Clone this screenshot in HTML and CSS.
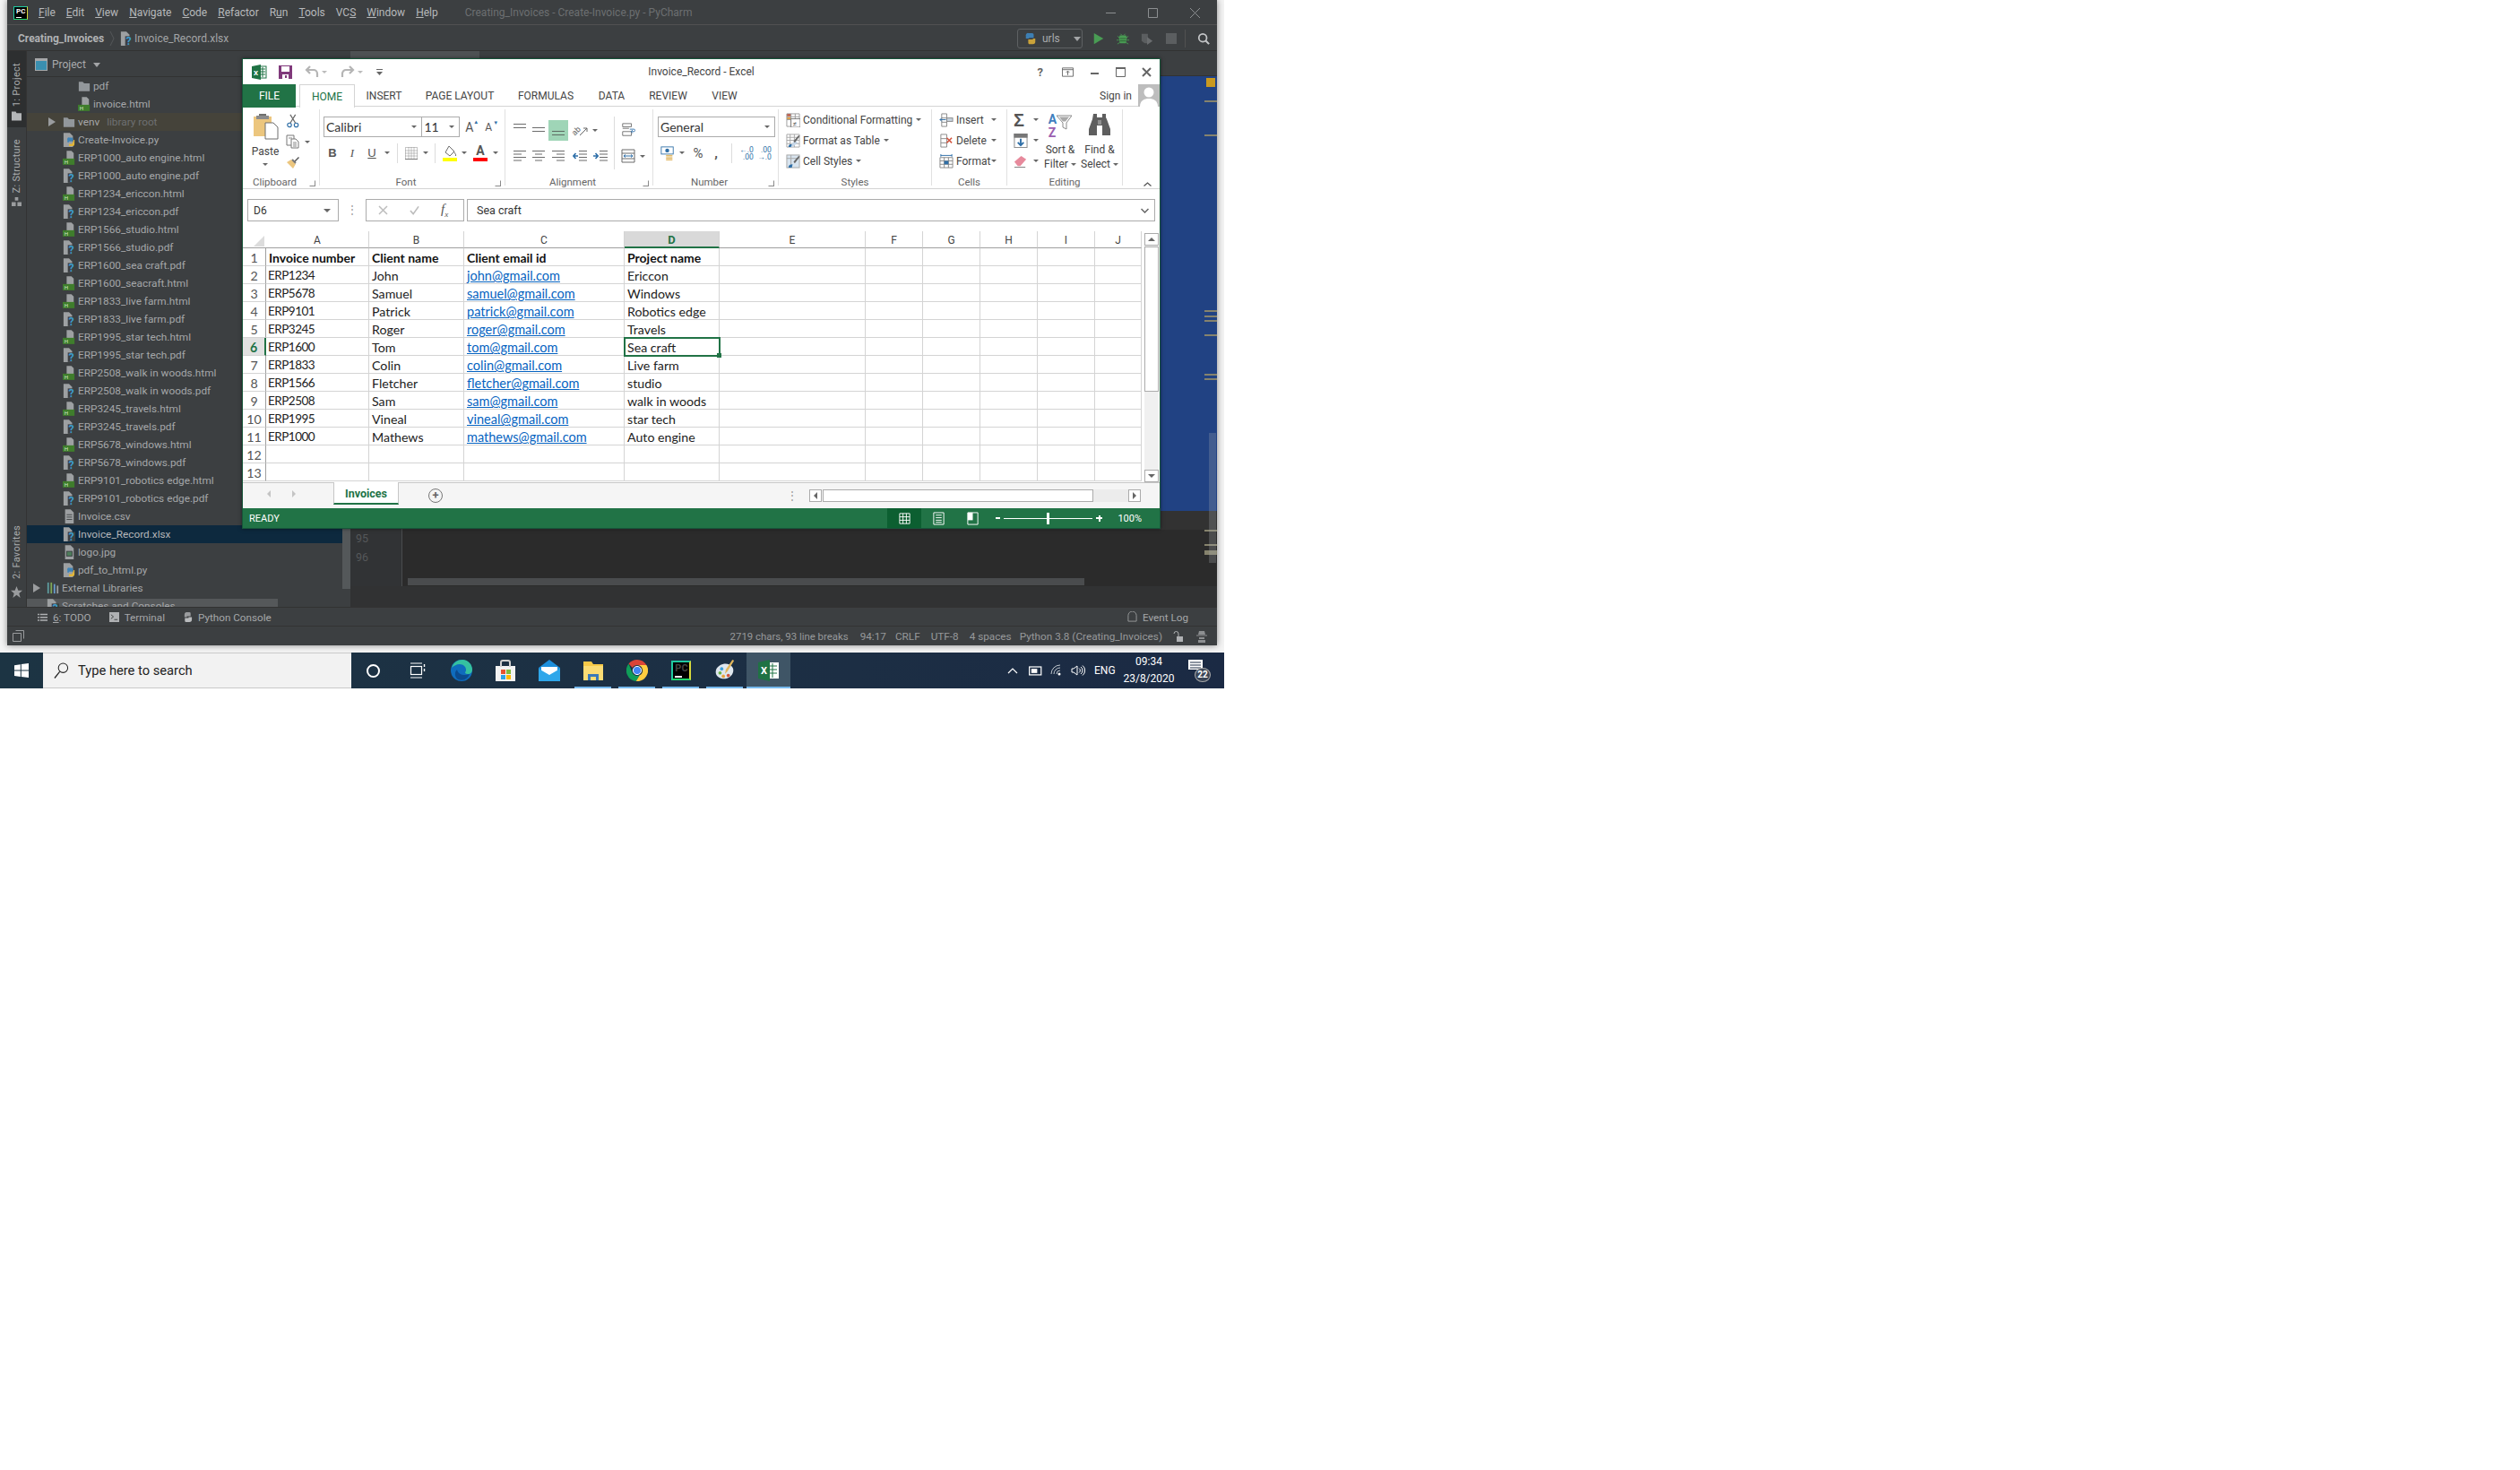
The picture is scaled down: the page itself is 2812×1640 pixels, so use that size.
FILE: index.html
```html
<!DOCTYPE html>
<html lang="en">
<head>
<meta charset="UTF-8" />
<title>Invoice_Record - Excel</title>
<link rel="stylesheet" href="styles.css">
</head>
<body>

<svg class="defs" xmlns="http://www.w3.org/2000/svg">
  <symbol id="f-h" viewBox="0 0 16 18"><path d="M5 0h6l3 3v7H5z" fill="#9da0a2"/><rect y="10" width="15" height="8" fill="#3f7d2c"/><text x="2" y="16.5" font-size="7" font-family="Roboto" fill="#cfe6c6">H</text></symbol>
  <symbol id="f-q" viewBox="0 0 16 18"><path d="M1 0h7l4 4v14H1z" fill="#9da0a2"/><rect x="6.500" y="6" width="9.500" height="12" fill="#3c3f41"/><text x="7.500" y="17.500" font-size="14" font-weight="700" font-family="Roboto" fill="#3d9ccc">?</text></symbol>
  <symbol id="f-py" viewBox="0 0 16 18"><path d="M1 0h8l4 4v14H1z" fill="#9da0a2"/><path d="M8 6h4a2 2 0 0 1 1 2v3H8v1H6v-3a2 2 0 0 1 2-3z" fill="#3d83b8"/><path d="M14 9h1v5a3 3 0 0 1-3 3H8v-3h4z" fill="#e0b53a"/></symbol>
  <symbol id="f-txt" viewBox="0 0 16 18"><path d="M3 0h7l4 4v14H3z" fill="#9da0a2"/><path d="M5 7h7M5 10h7M5 13h7" stroke="#3c3f41"/></symbol>
  <symbol id="f-img" viewBox="0 0 16 18"><path d="M3 0h7l4 4v14H3z" fill="#9da0a2"/><rect x="5" y="8" width="7" height="6" fill="#4d7c5a" stroke="#3c3f41"/></symbol>
  <symbol id="folder" viewBox="0 0 16 14"><path d="M1 1h5l2 2h7v10H1z" fill="#92979b"/></symbol>
  <symbol id="libs" viewBox="0 0 16 16"><path d="M1 1h2v14H1z" fill="#5f9ea0"/><path d="M5 1h2v14H5z" fill="#7fa856"/><path d="M9 3h2v12H9z" fill="#6a9fd0"/><path d="M13 5h2v10h-2z" fill="#9da0a2"/></symbol>
  <symbol id="grid" viewBox="0 0 16 16"><path d="M2 2h12v12H2zM2 6h12M2 10h12M6 2v12M10 2v12" fill="none" stroke="#fff"/></symbol>

  <symbol id="al-top" viewBox="0 0 16 16"><path d="M1 1.500h14M1 5.500h14" stroke="#6b6b6b"/></symbol>
  <symbol id="al-mid" viewBox="0 0 16 16"><path d="M1 5.500h14M1 9.500h14" stroke="#6b6b6b"/></symbol>
  <symbol id="al-bot" viewBox="0 0 16 16"><path d="M1 9.500h14M1 13.500h14" stroke="#5d6b62"/></symbol>
  <symbol id="al-l" viewBox="0 0 16 16"><path d="M1 2.500h14M1 6h9M1 9.500h14M1 13h9" stroke="#6b6b6b"/></symbol>
  <symbol id="al-c" viewBox="0 0 16 16"><path d="M1 2.500h14M4 6h8M1 9.500h14M4 13h8" stroke="#6b6b6b"/></symbol>
  <symbol id="al-r" viewBox="0 0 16 16"><path d="M1 2.500h14M6 6h9M1 9.500h14M6 13h9" stroke="#6b6b6b"/></symbol>
  <symbol id="ind-l" viewBox="0 0 16 16"><path d="M7 2.500h9M7 6h9M7 9.500h9M7 13h9" stroke="#6b6b6b"/><path d="M6 8H1M3.500 5L.8 8l2.700 3" fill="none" stroke="#2d6ea8" stroke-width="1.600"/></symbol>
  <symbol id="ind-r" viewBox="0 0 16 16"><path d="M7 2.500h9M7 6h9M7 9.500h9M7 13h9" stroke="#6b6b6b"/><path d="M0 8h5M2.500 5L5.200 8l-2.700 3" fill="none" stroke="#2d6ea8" stroke-width="1.600"/></symbol>
  <symbol id="orient" viewBox="0 0 18 16"><text x="0" y="12" font-size="9" font-family="Roboto" fill="#666" transform="rotate(-45 5 9)">ab</text><path d="M9 14l8-8m0 0h-4m4 0v4" fill="none" stroke="#666"/></symbol>
  <symbol id="wrap" viewBox="0 0 16 18"><path d="M1 1h11v4H1zM1 7h8M1 11h11v5H1z" fill="none" stroke="#6b6b6b"/><path d="M10 8h5a1.500 1.500 0 0 1 0 3h-3m1.500-2L11.500 11l2 2" fill="none" stroke="#2d6ea8"/></symbol>
  <symbol id="merge" viewBox="0 0 16 16"><path d="M1 1h14v14H1zM1 5h14M1 11h14" fill="none" stroke="#6b6b6b"/><path d="M3 8h10M3 8l2-1.500M3 8l2 1.500M13 8l-2-1.500M13 8l-2 1.500" fill="none" stroke="#2d6ea8"/></symbol>

  <symbol id="border" viewBox="0 0 16 16"><path d="M1.500 1.500h13v13h-13zM1.500 8h13M8 1.500v13M5 1.500v13M11 1.500v13M1.500 5h13M1.500 11h13" fill="none" stroke="#8a8a8a" stroke-dasharray="1 1"/><path d="M1 14.500h14" stroke="#777"/></symbol>
  <symbol id="fill" viewBox="0 0 18 18"><path d="M8 1l6 6-5 5-5-4z" fill="#fff" stroke="#6a6a6a"/><path d="M14 8c1 2 2 2 1.500 4" fill="none" stroke="#6a6a6a"/><rect x="1" y="14" width="16" height="4" fill="#ffff00"/></symbol>
  <symbol id="paste" viewBox="0 0 30 30"><path d="M2 4h20v22H2z" fill="#ecc67e"/><path d="M8 3h8V1H8z" fill="#70706e"/><rect x="5" y="3" width="14" height="4" fill="#8c8c8c"/><path d="M15 11h9l5 5v13H15z" fill="#fff" stroke="#6e6e6e"/></symbol>
  <symbol id="scissors" viewBox="0 0 16 18"><circle cx="3.500" cy="14" r="2.500" fill="none" stroke="#2f6fa7" stroke-width="1.300"/><circle cx="12" cy="14" r="2.500" fill="none" stroke="#2f6fa7" stroke-width="1.300"/><path d="M4.500 11.500L11 1M11 11.500L4.500 1" stroke="#6a6a6a" stroke-width="1.400"/></symbol>
  <symbol id="copy" viewBox="0 0 16 16"><path d="M1 1h8v11H1z" fill="#fff" stroke="#777"/><path d="M6 5h5l3 3v7H6z" fill="#fff" stroke="#777"/><path d="M8 9h4M8 11h4M8 13h4M3 4h4" stroke="#888"/></symbol>
  <symbol id="painter" viewBox="0 0 16 16"><path d="M1 8l7 7 3-5-5-5z" fill="#ecc67e"/><path d="M9 7l5-5 1 1-5 5z" fill="#555"/><path d="M7 5l4 4" stroke="#777" stroke-width="2"/></symbol>
  <symbol id="cond" viewBox="0 0 17 17"><rect x="1" y="1" width="5" height="3" fill="#c9553f"/><rect x="1" y="5" width="5" height="3" fill="#e1a24a"/><path d="M1 1h15v15H1zM1 4.500h15M1 8h15M6 1v15M11 1v15" fill="none" stroke="#9a9a9a"/><rect x="6" y="7" width="11" height="10" fill="#fff" stroke="#777"/><text x="8" y="15.500" font-size="9" font-family="Roboto" fill="#555">≠</text></symbol>
  <symbol id="fmt-table" viewBox="0 0 17 17"><path d="M1 1h15v15H1zM1 4.500h15M1 8h15M1 12h15M5 1v15M10 1v15" fill="none" stroke="#a6a6a6"/><path d="M3 16l8-8 3 3-6 5z" fill="#c6d6e6"/><path d="M9 9l6-7 1.500 1-6 8z" fill="#666"/><path d="M3 16c0-3 2-4 4-3l-1 3z" fill="#2f6fa7"/></symbol>
  <symbol id="cell-style" viewBox="0 0 17 17"><rect x="1" y="1" width="15" height="15" fill="#d8e4ef" stroke="#a6a6a6"/><path d="M1 5h15M6 1v15" stroke="#a6a6a6"/><path d="M9 9l6-7 1.500 1-6 8z" fill="#666"/><path d="M3 16c0-3 2-4 5-4l-1 4z" fill="#2f6fa7"/></symbol>
  <symbol id="c-ins" viewBox="0 0 17 17"><path d="M3 1h6v15H3zM3 6h6M3 11h6" fill="none" stroke="#888"/><rect x="9" y="6" width="7" height="4" fill="#c8d4e0" stroke="#888"/><path d="M8 8H1m2-2L1 8l2 2" fill="none" stroke="#2f6fa7"/></symbol>
  <symbol id="c-del" viewBox="0 0 17 17"><path d="M2 1h7v15H2zM2 6h7M2 11h7" fill="none" stroke="#888"/><path d="M9 5l6 6m0-6l-6 6" stroke="#d2553f" stroke-width="1.600"/></symbol>
  <symbol id="c-fmt" viewBox="0 0 17 17"><path d="M1 4h15v12H1zM1 8h15M1 12h15M6 4v12M11 4v12" fill="none" stroke="#888"/><path d="M2 1.500h13M2 0v3M15 0v3" fill="none" stroke="#2f6fa7"/><rect x="6" y="8" width="5" height="4" fill="#2f6fa7"/></symbol>
  <symbol id="filldown" viewBox="0 0 16 17"><rect x=".5" y=".5" width="15" height="16" fill="#fff" stroke="#888"/><rect width="16" height="5" fill="#777"/><path d="M8 6v8M4.500 10.500L8 14l3.500-3.500" fill="none" stroke="#2f6fa7" stroke-width="2"/></symbol>
  <symbol id="eraser" viewBox="0 0 17 17"><path d="M1 9l8-7 6 4-7 8H5z" fill="#e78a9c"/><path d="M1 15.500h13" stroke="#777"/></symbol>
  <symbol id="funnel" viewBox="0 0 17 17"><path d="M0 1h17l-6 8v7l-4-2V9z" fill="#fff" stroke="#8a8a8a"/><path d="M3 2.500h11l-4 5H7z" fill="#a8a8a8"/></symbol>
  <symbol id="binoc" viewBox="0 0 26 26"><path d="M6 1h4v4h6V1h4v4l1 2 4 11v7h-9V14h-6v11H1v-7L5 7z" fill="#5e5e5e"/><path d="M11 8h4v5h-4z" fill="#909090"/></symbol>
  <symbol id="money" viewBox="0 0 18 18"><rect x="1" y="1" width="15" height="9" fill="#fff" stroke="#2f6fa7"/><circle cx="8.500" cy="5.500" r="2.500" fill="#2f6fa7"/><rect x="7" y="11" width="8" height="2" fill="#e3bb6b"/><rect x="7" y="14" width="8" height="2" fill="#e3bb6b"/><rect x="7" y="16.500" width="8" height="1.500" fill="#e3bb6b"/></symbol>

  <symbol id="start" viewBox="0 0 16 16"><path d="M0 2.200L6.800 1.200v6.400H0zM7.800 1.100L16 0v7.600H7.800zM0 8.600h6.800v6.300L0 14zM7.800 8.600H16V16l-8.200-1.100z" fill="#fff"/></symbol>
  <symbol id="taskview" viewBox="0 0 18 18"><path d="M1 1h13M1 17h13" stroke="#fff" stroke-width="1.200"/><rect x="1.500" y="4.500" width="12" height="9" fill="none" stroke="#fff" stroke-width="1.200"/><path d="M16.500 2v3M16.500 7v3" stroke="#fff" stroke-width="1.400"/></symbol>
  <symbol id="edge" viewBox="0 0 24 24"><circle cx="12" cy="12" r="12" fill="#0f6cbd"/><path d="M1 9C3 2 9 0 13 0c7 0 11 6 11 11 0 3-2 5-5 5-2 0-3-1-3-2 1-1 1-2 1-3 0-3-3-6-7-6-4 0-7 2-9 4z" fill="#35c1a0"/><path d="M8 22c-4-3-4-8-1-11 1 4 4 6 9 6 2 0 4-1 5-1-2 5-6 8-13 6z" fill="#0b4b8e"/></symbol>
  <symbol id="store" viewBox="0 0 24 24"><path d="M1 7h22v17H1z" fill="#f2f2f2"/><path d="M7 8V3a2 2 0 0 1 2-2h6a2 2 0 0 1 2 2v5" fill="none" stroke="#d0d0d0" stroke-width="2"/><rect x="7" y="11" width="5" height="5" fill="#e8532e"/><rect x="13" y="11" width="5" height="5" fill="#7fba3c"/><rect x="7" y="17" width="5" height="5" fill="#2ea3e6"/><rect x="13" y="17" width="5" height="5" fill="#fdb900"/></symbol>
  <symbol id="mail" viewBox="0 0 24 24"><path d="M0 9L12 0l12 9v15H0z" fill="#1c8fdc"/><path d="M3 8h18v7l-9 5-9-5z" fill="#fff"/><path d="M0 10l12 7 12-7v14H0z" fill="#2fa7ea"/></symbol>
  <symbol id="explorer" viewBox="0 0 24 24"><path d="M1 2h9l2 3h11v18H1z" fill="#f7c948"/><path d="M1 7h22v16H1z" fill="#fbdc74"/><path d="M6 23v-7h12v7h-3v-4H9v4z" fill="#3a79b8"/></symbol>
  <symbol id="chrome" viewBox="0 0 24 24"><path d="M12 0a12 12 0 0 1 10.400 6H12a6 6 0 0 0-5.200 3L2.500 4.600A12 12 0 0 1 12 0z" fill="#db4437"/><path d="M2.500 4.600L6.800 15a6 6 0 0 0 8 2.300L10.800 24A12 12 0 0 1 2.500 4.600z" fill="#0f9d58"/><path d="M22.400 6A12 12 0 0 1 10.800 24l4-6.700A6 6 0 0 0 12 6z" fill="#ffcd40"/><circle cx="12" cy="12" r="4.600" fill="#4285f4" stroke="#fff"/></symbol>
  <symbol id="palette" viewBox="0 0 26 26"><path d="M12 5c7-1 12 4 11 9-1 6-7 10-13 9-6-1-9-5-8-10 1-4 5-7 10-8z" fill="#dfe7ee"/><circle cx="9" cy="11" r="2" fill="#3ca0dc"/><circle cx="7" cy="16" r="2" fill="#6bb344"/><circle cx="11" cy="20" r="2" fill="#e8a13a"/><circle cx="17" cy="19" r="2" fill="#d2553f"/><path d="M22 0l2 1-8 13-3 3 1-5z" fill="#e2b75c"/></symbol>
</svg>

<div class="desktop">
  <div class="ide">
    <div class="menubar">
      <div class="pc-logo"><span>PC</span></div>
      <nav class="menu">
        <span><u>F</u>ile</span><span><u>E</u>dit</span><span><u>V</u>iew</span><span><u>N</u>avigate</span><span><u>C</u>ode</span><span><u>R</u>efactor</span><span>R<u>u</u>n</span><span><u>T</u>ools</span><span>VC<u>S</u></span><span><u>W</u>indow</span><span><u>H</u>elp</span>
      </nav>
      <div class="ide-title">Creating_Invoices - Create-Invoice.py - PyCharm</div>
      <div class="win-ctl">
        <svg class="wc" viewBox="0 0 11 11"><path d="M0 5.500h11" stroke="#8c8f91"/></svg>
        <svg class="wc" viewBox="0 0 11 11"><path d="M.5.500h10v10H.5z" fill="none" stroke="#8c8f91"/></svg>
        <svg class="wc" viewBox="0 0 11 11"><path d="M0 0l11 11M11 0L0 11" stroke="#8c8f91"/></svg>
      </div>
    </div>

    <div class="navbar">
      <b class="crumb">Creating_Invoices</b>
      <svg class="crumb-sep" viewBox="0 0 6 18"><path d="M1 1l4 8-4 8" fill="none" stroke="#55585a"/></svg>
      <svg class="fi"><use href="#f-q"/></svg>
      <span class="crumb-file">Invoice_Record.xlsx</span>
      <div class="runbar">
        <div class="run-combo">
          <svg class="py-ic" viewBox="0 0 16 16"><path d="M5 1h5a2 2 0 0 1 2 2v4H6v1H2V5a3 3 0 0 1 3-4z" fill="#3d7fb3"/><path d="M14 8v4a3 3 0 0 1-3 3H6a2 2 0 0 1-1-2V9h6V8z" fill="#c9a23a"/></svg>
          <span>urls</span>
          <i class="caret-ide"></i>
        </div>
        <svg class="rb" viewBox="0 0 14 16"><path d="M1 1l12 7-12 7z" fill="#499c54"/></svg>
        <svg class="rb" viewBox="0 0 16 16"><path d="M4 4h8l1 3-1 7H4L3 7z" fill="#499c54"/><path d="M1 5l3 2M15 5l-3 2M0 10h3M16 10h-3M1 15l3-2M15 15l-3-2M5 2l2 2M11 2L9 4" stroke="#499c54"/><path d="M4 8h8M4 11h8" stroke="#2f6034"/></svg>
        <svg class="rb" viewBox="0 0 16 16"><path d="M1 2h8v12H5l-4-3z" fill="#5b5e60"/><path d="M8 6l7 5-7 5z" fill="#6a6d6f"/></svg>
        <svg class="rb" viewBox="0 0 14 14"><rect x="1" y="1" width="12" height="12" fill="#5b5e60"/></svg>
        <i class="rb-sep"></i>
        <svg class="rb" viewBox="0 0 16 16"><circle cx="7" cy="7" r="5" fill="none" stroke="#c4c6c8" stroke-width="2"/><path d="M10.500 10.500L15 15" stroke="#c4c6c8" stroke-width="2.400"/></svg>
      </div>
    </div>

    <div class="main">
      <aside class="stripe">
        <div class="stripe-btn active"><span class="vtext">1: Project</span><svg class="st-ic" viewBox="0 0 12 11"><path d="M0 0h5l1 2h6v9H0z" fill="#b4b6b8"/></svg></div>
        <div class="stripe-btn"><span class="vtext">Z: Structure</span><svg class="st-ic" viewBox="0 0 12 12"><path d="M4 0h4v4H4zM0 6h5v5H0zM7 6h5v5H7z" fill="#9a9c9e"/></svg></div>
        <div class="stripe-btn fav"><span class="vtext">2: Favorites</span><svg class="st-ic star" viewBox="0 0 14 14"><path d="M7 0l2 5h5l-4 3.500L11.500 14 7 10.500 2.500 14 4 8.500 0 5h5z" fill="#9a9c9e"/></svg></div>
      </aside>

      <section class="project">
        <header class="project-head">
          <svg class="proj-ic" viewBox="0 0 14 14"><rect x=".5" y=".5" width="13" height="13" fill="#3a8fb0" stroke="#a6a8aa"/><rect x="1" y="1" width="12" height="2" fill="#a6a8aa"/></svg>
          <span>Project</span><i class="caret-ide"></i>
        </header>
        <ul class="tree">
          <li class="row lv2"><svg class="fi fold"><use href="#folder"/></svg>pdf</li>
          <li class="row lv2"><svg class="fi"><use href="#f-h"/></svg>invoice.html</li>
          <li class="row venv"><i class="arrow"></i><svg class="fi fold"><use href="#folder"/></svg>venv<em>library root</em></li>
          <li class="row"><svg class="fi"><use href="#f-py"/></svg>Create-Invoice.py</li>
          <li class="row"><svg class="fi"><use href="#f-h"/></svg>ERP1000_auto engine.html</li>
          <li class="row"><svg class="fi"><use href="#f-q"/></svg>ERP1000_auto engine.pdf</li>
          <li class="row"><svg class="fi"><use href="#f-h"/></svg>ERP1234_ericcon.html</li>
          <li class="row"><svg class="fi"><use href="#f-q"/></svg>ERP1234_ericcon.pdf</li>
          <li class="row"><svg class="fi"><use href="#f-h"/></svg>ERP1566_studio.html</li>
          <li class="row"><svg class="fi"><use href="#f-q"/></svg>ERP1566_studio.pdf</li>
          <li class="row"><svg class="fi"><use href="#f-q"/></svg>ERP1600_sea craft.pdf</li>
          <li class="row"><svg class="fi"><use href="#f-h"/></svg>ERP1600_seacraft.html</li>
          <li class="row"><svg class="fi"><use href="#f-h"/></svg>ERP1833_live farm.html</li>
          <li class="row"><svg class="fi"><use href="#f-q"/></svg>ERP1833_live farm.pdf</li>
          <li class="row"><svg class="fi"><use href="#f-h"/></svg>ERP1995_star tech.html</li>
          <li class="row"><svg class="fi"><use href="#f-q"/></svg>ERP1995_star tech.pdf</li>
          <li class="row"><svg class="fi"><use href="#f-h"/></svg>ERP2508_walk in woods.html</li>
          <li class="row"><svg class="fi"><use href="#f-q"/></svg>ERP2508_walk in woods.pdf</li>
          <li class="row"><svg class="fi"><use href="#f-h"/></svg>ERP3245_travels.html</li>
          <li class="row"><svg class="fi"><use href="#f-q"/></svg>ERP3245_travels.pdf</li>
          <li class="row"><svg class="fi"><use href="#f-h"/></svg>ERP5678_windows.html</li>
          <li class="row"><svg class="fi"><use href="#f-q"/></svg>ERP5678_windows.pdf</li>
          <li class="row"><svg class="fi"><use href="#f-h"/></svg>ERP9101_robotics edge.html</li>
          <li class="row"><svg class="fi"><use href="#f-q"/></svg>ERP9101_robotics edge.pdf</li>
          <li class="row"><svg class="fi"><use href="#f-txt"/></svg>Invoice.csv</li>
          <li class="row selected"><svg class="fi"><use href="#f-q"/></svg>Invoice_Record.xlsx</li>
          <li class="row"><svg class="fi"><use href="#f-img"/></svg>logo.jpg</li>
          <li class="row"><svg class="fi"><use href="#f-py"/></svg>pdf_to_html.py</li>
          <li class="row lv0"><i class="arrow"></i><svg class="fi"><use href="#libs"/></svg>External Libraries</li>
          <li class="row lv0 scratches"><i class="arrow-gap"></i><svg class="fi"><use href="#f-q"/></svg>Scratches and Consoles</li>
        </ul>
        <div class="tree-scroll"></div>
      </section>

      <section class="editor">
        <div class="editor-tabs"><i class="etab"></i></div>
        <div class="editor-body">
          <div class="gutter"><span>95</span><span>96</span></div>
          <div class="code">
            <div class="selection"></div>
            <div class="caret-line"></div>
            <div class="hscroll"></div>
            <div class="err-mark"></div>
            <i class="mark" style="top:27px"></i><i class="mark" style="top:65px"></i><i class="mark" style="top:261px"></i><i class="mark" style="top:267px"></i><i class="mark" style="top:272px"></i><i class="mark" style="top:288px"></i><i class="mark" style="top:332px"></i><i class="mark" style="top:337px"></i><i class="mark" style="top:506px"></i><i class="mark" style="top:522px"></i><i class="mark thick" style="top:529px"></i>
            <div class="vthumb"></div>
          </div>
        </div>
        <div class="editor-foot"></div>
      </section>
    </div>

    <div class="toolbar">
      <div class="tw first"><svg class="tw-ic" viewBox="0 0 12 12"><path d="M0 2h2v1.500H0zM3 2h9v1.500H3zM0 5.500h2V7H0zM3 5.500h9V7H3zM0 9h2v1.500H0zM3 9h9v1.500H3z" fill="#afb1b3"/></svg><span><u>6</u>: TODO</span></div>
      <div class="tw"><svg class="tw-ic" viewBox="0 0 12 12"><rect width="12" height="12" fill="#afb1b3"/><path d="M2 3l3 2.500L2 8M6 9h4" fill="none" stroke="#3c3f41"/></svg><span>Terminal</span></div>
      <div class="tw"><svg class="tw-ic" viewBox="0 0 12 12"><path d="M4 0h4a1.500 1.500 0 0 1 1.500 1.500V5H5v1H2V3a3 3 0 0 1 2-3z" fill="#9a9c9e"/><path d="M11 6v3a3 3 0 0 1-3 3H4a1.500 1.500 0 0 1-1.500-1.500V7H7V6z" fill="#b9bbbd"/></svg><span>Python Console</span></div>
      <div class="tw event"><svg class="tw-ic" viewBox="0 0 12 14"><path d="M1 12V5a5 5 0 0 1 10 0v7z" fill="none" stroke="#9a9c9e"/></svg><span>Event Log</span></div>
    </div>

    <div class="statusbar">
      <svg class="sb-ic" viewBox="0 0 13 13"><path d="M3.500.500h9v9M.5 3.500h9v9h-9z" fill="none" stroke="#9a9c9e"/></svg>
      <div class="sb-right">
        <span class="s1">2719 chars, 93 line breaks</span><span class="s2">94:17</span><span class="s3">CRLF</span><span class="s4">UTF-8</span><span class="s5">4 spaces</span><span class="s6">Python 3.8 (Creating_Invoices)</span>
        <svg class="sb-lock" viewBox="0 0 12 12"><path d="M1 3a2.500 2.500 0 0 1 5 0v3" fill="none" stroke="#afb1b3"/><rect x="4" y="6" width="7" height="6" fill="#afb1b3"/></svg>
        <svg class="sb-hector" viewBox="0 0 12 14"><path d="M3 1h6l1 4H2zM0 5.500h12v1H0zM3 8h6v2H3zM2 11h8v3H2z" fill="#8d8f91"/></svg>
      </div>
    </div>
  </div>

  <!-- excel floats over the IDE -->
  <div class="excel">
    <div class="xl-title">
      <div class="qat">
        <svg class="q-xl" viewBox="0 0 17 17"><rect x="7" y="2" width="9" height="13" fill="#fff" stroke="#1f7244"/><path d="M9 5h6M9 8h6M9 11h6M12 3v11" stroke="#1f7244"/><path d="M0 2l10-2v17L0 15z" fill="#1f7244"/><text x="2" y="12" font-size="8" font-weight="700" font-family="Roboto" fill="#fff">X</text></svg>
        <svg class="q-save" viewBox="0 0 15 15"><path d="M0 0h15v15H0z" fill="#80397b"/><rect x="3" y="1" width="9" height="6" fill="#fff"/><rect x="4" y="10" width="7" height="5" fill="#fff"/><rect x="7" y="11" width="2" height="3" fill="#80397b"/></svg>
        <svg class="q-undo" viewBox="0 0 16 14"><path d="M2 5h8a4 4 0 0 1 4 4v4M6 1L2 5l4 4" fill="none" stroke="#b5b5b5" stroke-width="2.200"/></svg><i class="caret lite"></i>
        <svg class="q-redo" viewBox="0 0 16 14"><path d="M14 5H6a4 4 0 0 0-4 4v4M10 1l4 4-4 4" fill="none" stroke="#b5b5b5" stroke-width="2.200"/></svg><i class="caret lite"></i>
        <svg class="q-more" viewBox="0 0 7 9"><path d="M0 1.500h7" stroke="#666"/><path d="M0 4l3.500 4L7 4z" fill="#666"/></svg>
      </div>
      <div class="xl-name">Invoice_Record - Excel</div>
      <div class="xl-ctl">
        <span class="help">?</span>
        <svg viewBox="0 0 14 11"><path d="M.5.500h13v10H.5zM.5 2.500h13M7 9V4.500M5 6l2-2 2 2" fill="none" stroke="#666"/></svg>
        <svg viewBox="0 0 11 11"><path d="M1 7h9" stroke="#666" stroke-width="2"/></svg>
        <svg viewBox="0 0 11 11"><path d="M.5.500h10v10H.5z" fill="none" stroke="#666"/><path d="M0 1h11" stroke="#666" stroke-width="2"/></svg>
        <svg viewBox="0 0 11 11"><path d="M1 1l9 9M10 1l-9 9" stroke="#666" stroke-width="2"/></svg>
      </div>
    </div>

    <div class="xl-tabs">
      <span class="t-file">FILE</span><i></i><span class="t-home">HOME</span><span>INSERT</span><span>PAGE LAYOUT</span><span>FORMULAS</span><span>DATA</span><span>REVIEW</span><span>VIEW</span>
      <div class="signin">Sign in
        <svg class="avatar" viewBox="0 0 24 25"><rect width="24" height="25" fill="#bdbdbd"/><circle cx="12" cy="9" r="5.500" fill="#fff"/><path d="M2 25c0-7 5-9 10-9s10 2 10 9z" fill="#fff"/></svg>
      </div>
    </div>

    <div class="ribbon">
      <div class="group g-clip">
        <div class="gbody clip-body">
          <div class="paste"><svg class="i-paste"><use href="#paste"/></svg><span>Paste</span><i class="caret"></i></div>
          <div class="clip-tools">
            <svg class="ico"><use href="#scissors"/></svg>
            <div class="with-caret"><svg class="ico"><use href="#copy"/></svg><i class="caret"></i></div>
            <svg class="ico"><use href="#painter"/></svg>
          </div>
        </div>
        <div class="glabel launchable">Clipboard<i class="launch"></i></div>
      </div>

      <div class="group g-font">
        <div class="gbody">
          <div class="frow">
            <div class="combo c-font">Calibri<i class="caret"></i></div>
            <div class="combo c-size">11<i class="caret"></i></div>
            <span class="growA">A<sup>▲</sup></span><span class="growA small">A<sup>▼</sup></span>
          </div>
          <div class="grid2 font2">
            <b class="tb">B</b><em class="tb serif">I</em><u class="tb">U</u><i class="caret"></i><i class="vsep"></i>
            <svg class="ico"><use href="#border"/></svg><i class="caret"></i><i class="vsep"></i>
            <svg class="ico wide"><use href="#fill"/></svg><i class="caret"></i>
            <span class="fcolor">A</span><i class="caret"></i>
          </div>
        </div>
        <div class="glabel launchable">Font<i class="launch"></i></div>
      </div>

      <div class="group g-align">
        <div class="gbody">
          <div class="grid2 align-grid">
            <svg class="ico"><use href="#al-top"/></svg><svg class="ico"><use href="#al-mid"/></svg><div class="al-on"><svg class="ico"><use href="#al-bot"/></svg></div><svg class="ico wide"><use href="#orient"/></svg><i class="caret left"></i><i class="vsep tall"></i><svg class="ico"><use href="#wrap"/></svg>
          </div>
          <div class="grid2 align-grid">
            <svg class="ico"><use href="#al-l"/></svg><svg class="ico"><use href="#al-c"/></svg><svg class="ico"><use href="#al-r"/></svg><svg class="ico"><use href="#ind-l"/></svg><svg class="ico"><use href="#ind-r"/></svg><i class="vsep tall"></i><svg class="ico"><use href="#merge"/></svg><i class="caret"></i>
          </div>
        </div>
        <div class="glabel launchable">Alignment<i class="launch"></i></div>
      </div>

      <div class="group g-num">
        <div class="gbody">
          <div class="combo c-num">General<i class="caret"></i></div>
          <div class="grid2 num2">
            <svg class="ico"><use href="#money"/></svg><i class="caret"></i><span class="pct">%</span><b class="comma">,</b><i class="vsep"></i>
            <span class="dec"><span>←.0</span><span>.00</span></span><span class="dec"><span>.00</span><span>→.0</span></span>
          </div>
        </div>
        <div class="glabel launchable">Number<i class="launch"></i></div>
      </div>

      <div class="group g-styles">
        <div class="gbody list">
          <div class="li"><svg class="ico"><use href="#cond"/></svg>Conditional Formatting<i class="caret"></i></div>
          <div class="li"><svg class="ico"><use href="#fmt-table"/></svg>Format as Table<i class="caret"></i></div>
          <div class="li"><svg class="ico"><use href="#cell-style"/></svg>Cell Styles<i class="caret"></i></div>
        </div>
        <div class="glabel">Styles</div>
      </div>

      <div class="group g-cells">
        <div class="gbody list">
          <div class="li"><svg class="ico"><use href="#c-ins"/></svg><span class="cw">Insert</span><i class="caret"></i></div>
          <div class="li"><svg class="ico"><use href="#c-del"/></svg><span class="cw">Delete</span><i class="caret"></i></div>
          <div class="li"><svg class="ico"><use href="#c-fmt"/></svg><span class="cw">Format</span><i class="caret"></i></div>
        </div>
        <div class="glabel">Cells</div>
      </div>

      <div class="group g-edit">
        <div class="gbody edit-body">
          <div class="edit-small">
            <div class="with-caret"><span class="sigma">Σ</span><i class="caret"></i></div>
            <div class="with-caret"><svg class="ico"><use href="#filldown"/></svg><i class="caret"></i></div>
            <div class="with-caret"><svg class="ico"><use href="#eraser"/></svg><i class="caret"></i></div>
          </div>
          <div class="big sort">
            <div class="big-ic"><span class="az"><span>A</span><span>Z</span></span><svg class="ico"><use href="#funnel"/></svg></div>
            <span>Sort &amp;</span><span>Filter<i class="caret"></i></span>
          </div>
          <div class="big find">
            <div class="big-ic"><svg class="i-binoc"><use href="#binoc"/></svg></div>
            <span>Find &amp;</span><span>Select<i class="caret"></i></span>
          </div>
        </div>
        <div class="glabel">Editing</div>
      </div>

      <div class="collapse"><svg viewBox="0 0 9 5"><path d="M.5 4.500L4.500 1l4 3.500" fill="none" stroke="#555" stroke-width="1.300"/></svg></div>
    </div>

    <div class="formula">
      <div class="namebox">D6<i class="caret"></i></div>
      <div class="fdots">⋮</div>
      <div class="fx-box">
        <svg viewBox="0 0 11 11"><path d="M1 1l9 9M10 1l-9 9" stroke="#bdbdbd" stroke-width="1.500"/></svg>
        <svg viewBox="0 0 12 11"><path d="M1 6l3.500 4L11 1" fill="none" stroke="#bdbdbd" stroke-width="1.800"/></svg>
        <i class="fx">f<sub>x</sub></i>
      </div>
      <div class="fbar">Sea craft<svg viewBox="0 0 9 6"><path d="M.5 1L4.500 5l4-4" fill="none" stroke="#666" stroke-width="1.500"/></svg></div>
    </div>

    <div class="sheet-wrap">
      <div class="sheet">
        <div class="h corner"><i></i></div><div class="h">A</div><div class="h">B</div><div class="h">C</div><div class="h on">D</div><div class="h">E</div><div class="h">F</div><div class="h">G</div><div class="h">H</div><div class="h">I</div><div class="h">J</div>

        <div class="rh">1</div><div class="c hd">Invoice number</div><div class="c hd">Client name</div><div class="c hd">Client email id</div><div class="c hd">Project name</div><div class="c"></div><div class="c"></div><div class="c"></div><div class="c"></div><div class="c"></div><div class="c"></div>
        <div class="rh">2</div><div class="c id">ERP1234</div><div class="c">John</div><div class="c"><a class="link" href="mailto:john@gmail.com">john@gmail.com</a></div><div class="c">Ericcon</div><div class="c"></div><div class="c"></div><div class="c"></div><div class="c"></div><div class="c"></div><div class="c"></div>
        <div class="rh">3</div><div class="c id">ERP5678</div><div class="c">Samuel</div><div class="c"><a class="link" href="mailto:samuel@gmail.com">samuel@gmail.com</a></div><div class="c">Windows</div><div class="c"></div><div class="c"></div><div class="c"></div><div class="c"></div><div class="c"></div><div class="c"></div>
        <div class="rh">4</div><div class="c id">ERP9101</div><div class="c">Patrick</div><div class="c"><a class="link" href="mailto:patrick@gmail.com">patrick@gmail.com</a></div><div class="c">Robotics edge</div><div class="c"></div><div class="c"></div><div class="c"></div><div class="c"></div><div class="c"></div><div class="c"></div>
        <div class="rh">5</div><div class="c id">ERP3245</div><div class="c">Roger</div><div class="c"><a class="link" href="mailto:roger@gmail.com">roger@gmail.com</a></div><div class="c">Travels</div><div class="c"></div><div class="c"></div><div class="c"></div><div class="c"></div><div class="c"></div><div class="c"></div>
        <div class="rh on">6</div><div class="c id">ERP1600</div><div class="c">Tom</div><div class="c"><a class="link" href="mailto:tom@gmail.com">tom@gmail.com</a></div><div class="c sel">Sea craft</div><div class="c"></div><div class="c"></div><div class="c"></div><div class="c"></div><div class="c"></div><div class="c"></div>
        <div class="rh">7</div><div class="c id">ERP1833</div><div class="c">Colin</div><div class="c"><a class="link" href="mailto:colin@gmail.com">colin@gmail.com</a></div><div class="c">Live farm</div><div class="c"></div><div class="c"></div><div class="c"></div><div class="c"></div><div class="c"></div><div class="c"></div>
        <div class="rh">8</div><div class="c id">ERP1566</div><div class="c">Fletcher</div><div class="c"><a class="link" href="mailto:fletcher@gmail.com">fletcher@gmail.com</a></div><div class="c">studio</div><div class="c"></div><div class="c"></div><div class="c"></div><div class="c"></div><div class="c"></div><div class="c"></div>
        <div class="rh">9</div><div class="c id">ERP2508</div><div class="c">Sam</div><div class="c"><a class="link" href="mailto:sam@gmail.com">sam@gmail.com</a></div><div class="c">walk in woods</div><div class="c"></div><div class="c"></div><div class="c"></div><div class="c"></div><div class="c"></div><div class="c"></div>
        <div class="rh">10</div><div class="c id">ERP1995</div><div class="c">Vineal</div><div class="c"><a class="link" href="mailto:vineal@gmail.com">vineal@gmail.com</a></div><div class="c">star tech</div><div class="c"></div><div class="c"></div><div class="c"></div><div class="c"></div><div class="c"></div><div class="c"></div>
        <div class="rh">11</div><div class="c id">ERP1000</div><div class="c">Mathews</div><div class="c"><a class="link" href="mailto:mathews@gmail.com">mathews@gmail.com</a></div><div class="c">Auto engine</div><div class="c"></div><div class="c"></div><div class="c"></div><div class="c"></div><div class="c"></div><div class="c"></div>
        <div class="rh">12</div><div class="c"></div><div class="c"></div><div class="c"></div><div class="c"></div><div class="c"></div><div class="c"></div><div class="c"></div><div class="c"></div><div class="c"></div><div class="c"></div>
        <div class="rh">13</div><div class="c"></div><div class="c"></div><div class="c"></div><div class="c"></div><div class="c"></div><div class="c"></div><div class="c"></div><div class="c"></div><div class="c"></div><div class="c"></div>
      </div>
      <div class="vscroll">
        <div class="sbtn"><i class="tri up"></i></div>
        <div class="sthumb"></div>
        <div class="sbtn"><i class="tri down"></i></div>
      </div>
    </div>

    <div class="tabbar">
      <div class="sheet-nav"><i class="tri lt"></i><i class="tri rt"></i></div>
      <div class="sheet-tab">Invoices</div>
      <div class="add-sheet">+</div>
      <div class="hs">
        <span class="hs-dots">⋮</span>
        <div class="sbtn"><i class="tri lt dark"></i></div>
        <div class="hs-thumb"></div>
        <div class="hs-track"></div>
        <div class="sbtn"><i class="tri rt dark"></i></div>
      </div>
    </div>

    <div class="xl-status">
      <span>READY</span>
      <div class="views">
        <div class="vw on"><svg viewBox="0 0 16 16"><use href="#grid"/></svg></div>
        <div class="vw"><svg viewBox="0 0 14 16"><path d="M1 1h12v14H1zM3.500 4h7M3.500 7h7M3.500 10h7M3.500 12.500h7" fill="none" stroke="#fff"/></svg></div>
        <div class="vw"><svg viewBox="0 0 14 16"><path d="M1 1h12v14H1z" fill="none" stroke="#fff"/><path d="M1 1h6v9H1z" fill="#fff"/></svg></div>
      </div>
      <div class="zoom">
        <i class="z-minus"></i>
        <div class="z-track"><i></i></div>
        <i class="z-plus"></i>
        <span>100%</span>
      </div>
    </div>
  </div>

  <div class="taskbar">
    <div class="tb-start"><svg class="i-start"><use href="#start"/></svg></div>
    <div class="tb-search">
      <svg class="i-mag" viewBox="0 0 18 20"><circle cx="11" cy="7" r="5.500" fill="none" stroke="#222" stroke-width="1.100"/><path d="M7 11.500L1 19" stroke="#222" stroke-width="1.300"/></svg>
      <span>Type here to search</span>
    </div>
    <div class="tb-app"><i class="cortana"></i></div>
    <div class="tb-app"><svg class="i-tv"><use href="#taskview"/></svg></div>
    <div class="tb-app"><svg class="i-app"><use href="#edge"/></svg></div>
    <div class="tb-app"><svg class="i-app"><use href="#store"/></svg></div>
    <div class="tb-app"><svg class="i-app"><use href="#mail"/></svg></div>
    <div class="tb-app run"><svg class="i-app"><use href="#explorer"/></svg></div>
    <div class="tb-app run"><svg class="i-app"><use href="#chrome"/></svg></div>
    <div class="tb-app run"><div class="pc-logo big"><span>PC</span></div></div>
    <div class="tb-app run"><svg class="i-app"><use href="#palette"/></svg></div>
    <div class="tb-app run active"><svg class="i-app" viewBox="0 0 24 24"><rect x="10" y="3" width="13" height="18" fill="#fff"/><path d="M12 7h9M12 11h9M12 15h9M16 4v16" stroke="#1f7244"/><path d="M0 3l13-3v24L0 21z" fill="#1f7244"/><text x="3" y="16" font-size="11" font-weight="700" font-family="Roboto" fill="#fff">X</text></svg></div>
    <div class="tray">
      <svg class="t-chev" viewBox="0 0 12 7"><path d="M1 6l5-5 5 5" fill="none" stroke="#fff" stroke-width="1.200"/></svg>
      <svg class="t-bat" viewBox="0 0 16 11"><rect x=".7" y=".7" width="14" height="9.500" fill="none" stroke="#fff" stroke-width="1.300"/><rect x="3" y="3" width="7" height="5" fill="#fff"/></svg>
      <svg class="t-wifi" viewBox="0 0 14 14"><path d="M1 11a10 10 0 0 1 10-10M4 11a7 7 0 0 1 7-7M7 11a4 4 0 0 1 4-4" fill="none" stroke="#bfc6cc"/><circle cx="10" cy="11" r="1.500" fill="#fff"/></svg>
      <svg class="t-vol" viewBox="0 0 16 14"><path d="M1 5h2l4-3v10L3 9H1z" fill="none" stroke="#fff"/><path d="M9 4.500a3 3 0 0 1 0 5M11 3a5 5 0 0 1 0 8M13 1.500a7 7 0 0 1 0 11" fill="none" stroke="#fff"/></svg>
      <span class="t-lang">ENG</span>
      <div class="t-clock"><span>09:34</span><span>23/8/2020</span></div>
      <div class="t-note"><svg viewBox="0 0 16 14"><path d="M0 0h16v11H0z" fill="#fff"/><path d="M2 3h12M2 6h12M2 9h12" stroke="#1c2c45"/></svg><b>22</b></div>
    </div>
  </div>
</div>

</body>
</html>
```

FILE: styles.css
```css
* { box-sizing: border-box; }
html, body { margin: 0; background: #fff; }
body { font-family: Roboto, "Liberation Sans", sans-serif; font-size: 12px; width: 2812px; height: 1640px; overflow: hidden; }
.defs { display: none; }
ul { list-style: none; margin: 0; padding: 0; }
i { font-style: normal; }

.desktop { position: relative; width: 1366px; height: 768px; background: #f4f4f4; padding: 0 8px; }

/* ---------- pycharm ---------- */
.ide { height: 720px; background: #3c3f41; color: #afb1b3; display: flex; flex-direction: column; box-shadow: 0 0 7px rgba(0,0,0,.45); }
.menubar { height: 28px; flex: none; display: flex; align-items: center; border-bottom: 1px solid #515151; padding: 1px 0 0 7px; }
.pc-logo { width: 16px; height: 15px; background: #000; border: 1px solid #20c9a0; border-right-color: #d8d83c; border-bottom-color: #20d66b; color: #fff; font: 700 8px/10px Roboto, sans-serif; padding-left: 2px; position: relative; flex: none; }
.pc-logo::after { content: ""; position: absolute; left: 2px; bottom: 1px; width: 6px; height: 1px; background: #fff; }
.menu { display: flex; gap: 12px; margin-left: 12px; color: #b7b9bb; }
.ide-title { margin-left: 30px; color: #6c6f71; }
.win-ctl { margin-left: auto; display: flex; gap: 36px; padding-right: 19px; }
.wc { width: 11px; height: 11px; display: block; }

.navbar { height: 29px; flex: none; display: flex; align-items: center; padding: 2px 0 0 12px; border-bottom: 1px solid #323232; }
.crumb { color: #b0b2b4; font-weight: 700; font-size: 12px; width: 102px; }
.crumb-sep { width: 6px; height: 18px; margin-right: 6px; }
.fi { width: 14px; height: 16px; flex: none; display: block; }
.crumb-file { margin-left: 2px; color: #a3a5a7; }
.runbar { margin-left: auto; display: flex; align-items: center; padding-right: 2px; }
.run-combo { width: 73px; height: 22px; border: 1px solid #5e6163; border-radius: 3px; display: flex; align-items: center; padding-left: 7px; gap: 6px; color: #a9abad; margin-right: 4px; }
.py-ic { width: 14px; height: 14px; }
.caret-ide { display: block; width: 0; height: 0; border: 4.5px solid transparent; border-top: 5px solid #a3a5a7; border-bottom: 0; }
.run-combo .caret-ide { margin-left: 9px; }
.rb { width: 14px; height: 14px; margin: 0 6px 0 7px; }
.rb-sep { width: 1px; height: 20px; background: #515151; margin: 0 6px 0 2px; }

.main { height: 620px; flex: none; display: flex; overflow: hidden; }
.stripe { width: 22px; flex: none; display: flex; flex-direction: column; position: relative; border-right: 1px solid #333; }
.stripe-btn { display: flex; flex-direction: column; align-items: center; padding-top: 13px; flex: none; gap: 5px; }
.stripe-btn.active { background: #2d2f30; height: 85px; }
.stripe-btn.fav { position: absolute; left: 0; right: 0; bottom: 10px; height: auto; padding: 0; }
.vtext { writing-mode: vertical-rl; transform: rotate(180deg); color: #a9abad; font-size: 11px; letter-spacing: .3px; }
.st-ic { width: 11px; height: 11px; flex: none; }
.st-ic.star { width: 13px; height: 13px; margin-top: 3px; }

.project { width: 361px; flex: none; position: relative; }
.project-head { height: 29px; display: flex; align-items: center; padding: 2px 0 0 9px; gap: 5px; border-bottom: 1px solid #323232; color: #a9abad; }
.proj-ic { width: 14px; height: 14px; }
.project-head .caret-ide { margin-left: 3px; }
.row { height: 20px; display: flex; align-items: center; padding-left: 40px; gap: 3px; color: #a5a7a9; white-space: nowrap; font-size: 11.8px; }
.row.lv2 { padding-left: 57px; }
.row.venv { padding-left: 24px; background: #45433a; }
.row .fold { height: 13px; }
.row em { font-style: normal; color: #6e7072; margin-left: 5px; }
.row.selected { background: #0d293e; margin-right: 9px; color: #b5b7b9; }
.row.lv0 { padding-left: 7px; }
.arrow { width: 0; height: 0; border: 5px solid transparent; border-left: 8px solid #9a9c9e; border-right: 0; margin-right: 4px; }
.arrow-gap { width: 12px; }
.row.venv .arrow { margin-right: 5px; }
.row.scratches { background: linear-gradient(#3c3f41 0 2px, #55585a 2px); width: 280px; }
.tree-scroll { position: absolute; right: 0; top: 240px; bottom: 20px; width: 9px; background: #54585a; }

.editor { flex: 1; display: flex; flex-direction: column; min-width: 0; }
.editor-tabs { height: 28px; flex: none; background: #3c3f41; border-bottom: 1px solid #323232; }
.etab { display: block; width: 144px; height: 8px; background: #4e5254; }
.editor-body { flex: 1; display: flex; min-height: 0; }
.gutter { width: 58px; flex: none; background: #313335; border-right: 1px solid #4a4c4e; color: #55585a; font-size: 12.5px; display: flex; flex-direction: column; justify-content: flex-end; padding: 0 0 22px 6px; line-height: 21px; }
.code { flex: 1; position: relative; background: #2b2b2b; min-width: 0; }
.selection { height: 485px; background: #214283; }
.caret-line { height: 21px; background: #323232; }
.hscroll { position: absolute; left: 6px; bottom: 1px; width: 755px; height: 8px; background: #4a4c4e; }
.err-mark { position: absolute; right: 2px; top: 2px; width: 10px; height: 10px; background: #c9991f; }
.mark { position: absolute; right: 0; width: 14px; height: 2px; background: #86836d; }
.mark.thick { height: 5px; }
.vthumb { position: absolute; right: 1px; top: 398px; width: 8px; height: 145px; background: rgba(170,175,180,.25); }
.editor-foot { height: 23px; flex: none; background: #313233; }

.toolbar { height: 22px; flex: none; display: flex; align-items: center; border-top: 1px solid #323232; border-bottom: 1px solid #333; padding: 1px 0 0 34px; gap: 20px; color: #a5a7a9; font-size: 11.7px; }
.tw { display: flex; align-items: center; gap: 6px; }
.tw-ic { width: 11px; height: 11px; }
.tw.event { margin-left: auto; padding-right: 32px; }
.tw.event .tw-ic { height: 13px; }
.statusbar { flex: 1; display: flex; align-items: center; padding-left: 6px; color: #97999b; font-size: 11.75px; }
.sb-ic { width: 13px; height: 13px; }
.sb-right { margin-left: auto; display: flex; align-items: center; gap: 12px; padding-right: 11px; }
.s1 { margin-right: 1px; font-size: 11.4px; }
.s2 { margin-right: -2px; }
.s5 { margin-right: -3px; }
.sb-lock { width: 12px; height: 12px; }
.sb-hector { width: 12px; height: 14px; margin-left: 2px; }

/* ---------- excel ---------- */
.excel { position: absolute; left: 270px; top: 65px; width: 1025px; height: 525px; background: #fff; border: 1px solid #17563a; box-shadow: 0 0 4px rgba(0,0,0,.5); display: flex; flex-direction: column; color: #444; }
.xl-title { height: 28px; flex: none; display: grid; grid-template-columns: 1fr auto 1fr; align-items: center; }
.qat { display: flex; align-items: center; padding-left: 10px; }
.q-xl { width: 17px; height: 17px; }
.q-save { width: 15px; height: 15px; margin-left: 13px; }
.q-undo { width: 16px; height: 14px; margin-left: 14px; }
.q-redo { width: 16px; height: 14px; margin-left: 15px; }
.q-more { width: 7px; height: 9px; margin-left: 15px; }
.caret.lite { border-top-color: #bbb; margin-left: 3px; }
.xl-name { font-size: 12px; color: #444; }
.xl-ctl { display: flex; justify-content: flex-end; align-items: center; padding-right: 9px; }
.xl-ctl svg { width: 11px; height: 11px; margin-left: 18px; }
.xl-ctl svg:first-of-type { width: 13px; margin-left: 21px; }
.help { font: 700 13px Roboto, sans-serif; color: #666; }

.xl-tabs { height: 25px; flex: none; display: grid; grid-template-columns: 59px 4px 62px 65px 104px 88px 59px 67px 59px 1fr; align-items: stretch; border-bottom: 1px solid #d4d4d4; font-size: 12px; }
.xl-tabs > span { display: flex; align-items: center; justify-content: center; color: #444; }
.xl-tabs .t-file { background: #217346; color: #fff; margin-bottom: -1px; }
.xl-tabs .t-home { color: #217346; border: 1px solid #d4d4d4; border-bottom: 0; background: #fff; margin-bottom: -1px; }
.signin { display: flex; align-items: center; justify-content: flex-end; gap: 7px; font-size: 12px; color: #444; }
.avatar { width: 24px; height: 25px; display: block; }

.ribbon { height: 92px; flex: none; display: flex; align-items: flex-start; border-bottom: 1px solid #d4d4d4; padding-top: 3px; }
.group { height: 85px; display: flex; flex-direction: column; border-right: 1px solid #e1e1e1; flex: none; }
.gbody { height: 73px; padding-top: 8px; display: flex; flex-direction: column; gap: 6px; }
.glabel { height: 16px; line-height: 16px; text-align: center; font-size: 11.5px; color: #666; position: relative; margin-bottom: -4px; }
.glabel.launchable { padding-right: 14px; }
.launch { position: absolute; right: 4px; top: 6px; width: 7px; height: 7px; border: 1px solid #8a8a8a; border-top-color: transparent; border-left-color: transparent; }

.ico { width: 16px; height: 16px; display: block; }
.ico.wide { width: 18px; height: 18px; }
.caret { display: block; width: 0; height: 0; border: 3px solid transparent; border-top: 3px solid #666; border-bottom: 0; flex: none; }
.vsep { display: block; width: 1px; height: 22px; background: #dcdcdc; }
.vsep.tall { height: 30px; }
.grid2 { display: grid; height: 23px; align-items: center; justify-items: center; }

.g-clip { width: 86px; }
.clip-body { flex-direction: row; padding: 4px 0 0; gap: 0; }
.paste { width: 48px; display: flex; flex-direction: column; align-items: center; padding-left: 2px; }
.i-paste { width: 30px; height: 30px; display: block; }
.paste span { margin-top: 5px; line-height: 16px; color: #444; }
.paste .caret { margin-top: 5px; }
.clip-tools { display: flex; flex-direction: column; padding-top: 1px; gap: 7px; align-items: flex-start; }
.with-caret { display: flex; align-items: center; gap: 5px; }

.g-font { width: 207px; padding-left: 0; }
.g-font .gbody { padding-left: 3px; }
.frow { display: flex; align-items: center; height: 23px; padding-left: 1px; }
.combo { height: 23px; border: 1px solid #ababab; display: flex; align-items: center; justify-content: space-between; padding: 0 5px 0 2px; font: 14px Lato, sans-serif; color: #333; background: #fff; }
.c-font { width: 111px; }
.c-size { width: 43px; margin-left: -1px; }
.growA { font-size: 14px; color: #555; width: 22px; margin-left: 6px; position: relative; }
.growA sup { position: absolute; font-size: 6px; left: 9px; top: -2px; color: #2f6fa7; line-height: 8px; }
.growA.small { font-size: 12px; margin-left: 0; }
.font2 { grid-template-columns: 22px 22px 22px 12px 10px 22px 10px 11px 22px 10px 26px 8px; }
.tb { font: 700 13px "Liberation Sans", sans-serif; color: #555; }
.tb.serif { font: italic 13px "Liberation Serif", serif; }
u.tb { font-weight: 400; }
.fcolor { display: block; font: 700 14px/13px Roboto, sans-serif; color: #555; border-bottom: 4px solid #f00; width: 16px; text-align: center; height: 18px; }

.g-align { width: 165px; }
.g-align .gbody { padding-left: 5px; }
.align-grid { grid-template-columns: 21px 22px 22px 26px 20px 10px 22px 10px; }
.al-on { width: 22px; height: 23px; background: #9fd5b7; display: flex; align-items: center; justify-content: center; margin-top: 0; }
.caret.left { justify-self: start; margin-left: 1px; }

.g-num { width: 140px; }
.g-num .gbody { padding-left: 5px; }
.c-num { width: 131px; }
.num2 { grid-template-columns: 22px 10px 26px 14px 20px 14px 26px; }
.pct { font-size: 15px; color: #555; }
.comma { font-size: 15px; line-height: 12px; color: #555; }
.dec { display: flex; flex-direction: column; font-size: 8.5px; line-height: 8px; color: #2f6fa7; align-items: flex-end; }

.list { padding-top: 0; gap: 0; }
.li { height: 23px; display: flex; align-items: center; color: #444; }
.li .ico { margin-right: 3px; }
.li .caret { margin-left: 4px; }
.g-styles { width: 171px; }
.g-styles .gbody { padding-left: 8px; }
.g-cells { width: 84px; }
.g-cells .gbody { padding-left: 8px; }
.cw { width: 39px; }
.g-cells .caret { margin-left: 0; }

.g-edit { width: 129px; }
.edit-body { flex-direction: row; gap: 0; padding: 0 0 0 7px; }
.edit-small { width: 33px; display: flex; flex-direction: column; }
.edit-small .with-caret { height: 23px; gap: 6px; }
.sigma { width: 16px; font: 700 20px/20px "Liberation Sans", sans-serif; color: #555; }
.big { display: flex; flex-direction: column; align-items: center; color: #444; line-height: 16px; }
.big .caret { display: inline-block; margin-left: 3px; vertical-align: middle; }
.big.sort { width: 38px; }
.big.find { width: 46px; margin-left: 2px; }
.big-ic { height: 37px; padding-top: 4px; display: flex; align-items: flex-start; gap: 0; }
.az { display: flex; flex-direction: column; font: 700 14px/15px Roboto, sans-serif; }
.az span:first-child { color: #3f7fbf; }
.az span:last-child { color: #9b5fb0; }
.big-ic .ico { margin-top: 2px; width: 17px; height: 17px; }
.i-binoc { width: 26px; height: 26px; display: block; }
.collapse { margin-left: auto; align-self: flex-end; padding: 0 9px 2px 0; }
.collapse svg { width: 9px; height: 5px; display: block; }

.formula { height: 25px; flex: none; margin-top: 11px; display: flex; padding: 0 5px; }
.namebox { width: 102px; border: 1px solid #ababab; display: flex; align-items: center; justify-content: space-between; padding: 0 8px 0 6px; font-size: 12px; color: #333; }
.namebox .caret { border-width: 4px; border-top-width: 4px; border-bottom: 0; }
.fdots { width: 30px; text-align: center; line-height: 25px; color: #9a9a9a; }
.fx-box { width: 110px; border: 1px solid #ababab; display: flex; align-items: center; padding-left: 13px; gap: 24px; }
.fx-box svg { width: 11px; height: 11px; }
.fx { font: italic 15px "Liberation Serif", serif; color: #555; }
.fx sub { font-size: 9px; }
.fbar { flex: 1; margin-left: 3px; border: 1px solid #ababab; display: flex; align-items: center; justify-content: space-between; padding: 0 6px 0 10px; font-size: 12.5px; color: #333; }
.fbar svg { width: 9px; height: 6px; }

.sheet-wrap { flex: none; height: 281px; margin-top: 11px; display: flex; border-bottom: 1px solid #c6c6c6; }
.sheet { display: grid; grid-template-columns: 26px 115px 106px 179px 106px 163px 64px 64px 64px 64px 52px; grid-template-rows: 19px repeat(13, 20px); width: 1003px; font: 14.2px/19px Lato, "Liberation Sans", sans-serif; color: #222; overflow: hidden; }
.h { display: flex; align-items: center; justify-content: center; border-right: 1px solid #d4d4d4; border-bottom: 1px solid #9f9f9f; color: #444; font: 12px Roboto, sans-serif; padding-top: 1px; }
.h.on { background: #d9d9d9; color: #217346; font-weight: 700; border-bottom: 2px solid #217346; font-size: 13px; }
.corner { border-right: 0; padding: 3px 2px 1px 8px; justify-content: flex-end; align-items: flex-end; }
.corner i { display: block; width: 12px; height: 12px; background: #dcdcdc; clip-path: polygon(100% 0, 100% 100%, 0 100%); }
.rh { display: flex; align-items: center; justify-content: center; border-right: 1px solid #9f9f9f; border-bottom: 1px solid #d4d4d4; color: #555; padding-top: 2px; }
.rh.on { background: #e1e1e1; color: #217346; font-weight: 700; border-right: 2px solid #217346; }
.c { border-right: 1px solid #d4d4d4; border-bottom: 1px solid #d4d4d4; padding: 1px 0 0 3px; white-space: nowrap; overflow: hidden; line-height: 19px; }
.c.hd { font-weight: 700; color: #111; font-size: 14px; }
.c.id { font-size: 13.5px; letter-spacing: -.5px; padding-left: 2px; }
.c.sel { outline: 2px solid #217346; outline-offset: -1px; overflow: visible; position: relative; }
.c.sel::after { content: ""; position: absolute; right: -3px; bottom: -3px; width: 5px; height: 5px; background: #217346; border: 0 solid #fff; }
.link { color: #0563c1; text-decoration: underline; font-size: 14.5px; }

.vscroll { width: 16px; margin: 2px 0 0 3px; display: flex; flex-direction: column; background: #f0f0f0; }
.sbtn { flex: none; background: #fff; border: 1px solid #ababab; display: flex; align-items: center; justify-content: center; }
.vscroll .sbtn { height: 14px; }
.sthumb { height: 162px; margin-top: 1px; background: #fff; border: 1px solid #ababab; margin-bottom: auto; }
.tri { display: block; width: 0; height: 0; border: 4px solid transparent; }
.tri.up { border-top: 0; border-bottom: 4px solid #666; }
.tri.down { border-bottom: 0; border-top: 4px solid #666; }
.tri.lt { border-left: 0; border-right: 4px solid #c4c4c4; }
.tri.rt { border-right: 0; border-left: 4px solid #c4c4c4; }
.tri.dark { border-left-color: #666; border-right-color: #666; }

.tabbar { flex: none; height: 28px; display: flex; align-items: flex-start; background: #f5f5f5; }
.sheet-nav { width: 101px; height: 24px; display: flex; align-items: center; gap: 24px; padding-left: 27px; }
.sheet-tab { width: 73px; height: 25px; margin-top: -1px; padding-top: 2px; background: #fff; border: 1px solid #c6c6c6; border-top: 0; border-bottom: 2px solid #217346; color: #217346; font-weight: 700; font-size: 12.5px; display: flex; align-items: center; justify-content: center; }
.add-sheet { width: 16px; height: 16px; border: 1px solid #777; border-radius: 50%; margin: 6px 0 0 33px; color: #666; font: 700 13px/13px Roboto, sans-serif; text-align: center; }
.hs { margin-left: auto; margin-right: 21px; display: flex; align-items: center; height: 14px; margin-top: 7px; }
.hs-dots { color: #9a9a9a; margin-right: 13px; }
.hs .sbtn { width: 14px; height: 14px; }
.hs-thumb { width: 302px; height: 14px; background: #fff; border: 1px solid #ababab; margin-left: 1px; }
.hs-track { width: 39px; height: 14px; background: #ececec; }

.xl-status { flex: 1; background: #217346; color: #fff; display: flex; align-items: center; padding-left: 7px; font-size: 11px; }
.views { display: flex; margin-left: auto; height: 100%; align-items: stretch; }
.vw { width: 38px; display: flex; align-items: center; justify-content: center; }
.vw.on { background: #0c5f31; }
.vw svg { width: 15px; height: 15px; }
.zoom { display: flex; align-items: center; margin: 0 20px 0 7px; }
.z-minus { width: 5px; height: 2px; background: #fff; margin-right: 4px; }
.z-track { width: 99px; height: 1px; background: #fff; position: relative; }
.z-track i { position: absolute; left: 48px; top: -6px; width: 3px; height: 13px; background: #fff; }
.z-plus { width: 7px; height: 7px; margin: 0 17px 0 4px; background: linear-gradient(#fff,#fff) center/7px 2px no-repeat, linear-gradient(#fff,#fff) center/2px 7px no-repeat; }

/* ---------- taskbar ---------- */
.taskbar { position: absolute; left: 0; top: 728px; width: 1366px; height: 40px; display: flex; background: linear-gradient(90deg, #1c3443, #1c2e44 70%, #1b2a44); color: #fff; }
.tb-start { width: 48px; display: flex; align-items: center; justify-content: center; }
.i-start { width: 16px; height: 16px; }
.tb-search { width: 344px; background: #f2f2f2; border: 1px solid #c9c9c9; border-width: 1px 0 1px 0; display: flex; align-items: center; padding-left: 12px; color: #222; font-size: 14.7px; gap: 10px; }
.i-mag { width: 17px; height: 20px; }
.tb-app { width: 49px; display: flex; align-items: center; justify-content: center; position: relative; }
.tb-app.run::after { content: ""; position: absolute; left: 4px; right: 4px; bottom: 0; height: 2px; background: #76b9ed; }
.tb-app.active { background: #3f5566; }
.tb-app.active::after { left: 0; right: 0; }
.cortana { width: 15px; height: 15px; border: 2px solid #fff; border-radius: 50%; }
.i-tv { width: 18px; height: 18px; }
.i-app { width: 24px; height: 24px; }
.pc-logo.big { width: 22px; height: 22px; border-width: 2px; font-size: 11px; line-height: 13px; }
.pc-logo.big::after { width: 8px; height: 2px; }
.tray { margin-left: auto; display: flex; align-items: center; padding-right: 16px; }
.t-chev { width: 12px; height: 7px; }
.t-bat { width: 15px; height: 11px; margin-left: 12px; }
.t-wifi { width: 14px; height: 14px; margin-left: 9px; }
.t-vol { width: 16px; height: 14px; margin-left: 9px; }
.t-lang { margin-left: 10px; font-size: 12px; width: 29px; }
.t-clock { display: flex; flex-direction: column; align-items: center; font-size: 12px; line-height: 19px; width: 60px; margin-left: 2px; }
.t-note { width: 24px; position: relative; margin-left: 14px; height: 24px; }
.t-note svg { width: 16px; height: 14px; display: block; }
.t-note b { position: absolute; left: 7px; top: 9px; width: 18px; height: 16px; border-radius: 50%; background: #3a4556; border: 1px solid #aaa; font-size: 10px; line-height: 14px; text-align: center; }
```
